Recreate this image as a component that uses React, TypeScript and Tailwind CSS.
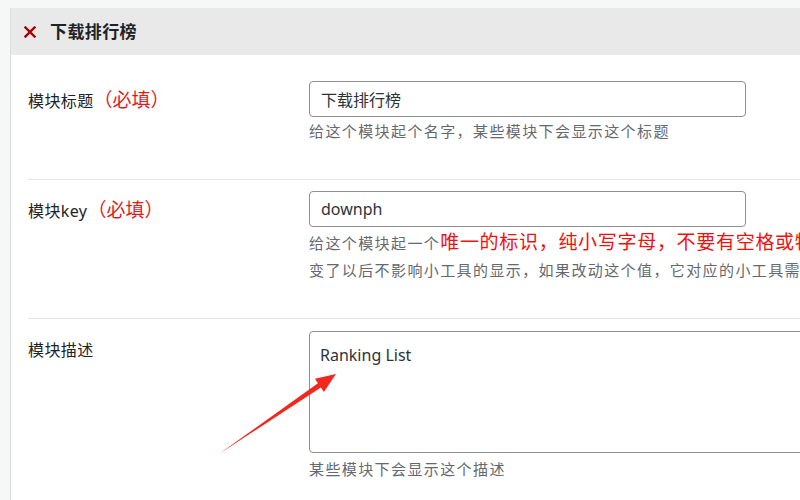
import React from 'react';

const cjk = '"Noto Sans", "Noto Sans CJK SC", sans-serif';

// 表单行
function Row({
  label,
  required,
  first,
  last,
  children,
}: {
  label: string;
  required?: boolean;
  first?: boolean;
  last?: boolean;
  children: React.ReactNode;
}) {
  return (
    <div
      className={`flex pb-[34px] ${first ? 'pt-[12px]' : 'border-t border-[#e4e4e6]'} ${
        !first && last ? 'pt-[12px]' : ''
      } ${!first && !last ? 'pt-[11px]' : ''}`}
    >
      <div className="w-[281px] shrink-0 pt-[7px] text-[16px] leading-[24px] text-[#1d2327] tracking-[0.4px]">
        {label}
        {required && <span className="text-[19px] tracking-[0px] text-[#dd1c1c]">（必填）</span>}
      </div>
      <div className="flex-1 min-w-0">{children}</div>
    </div>
  );
}

export default function App() {
  return (
    <div
      className="relative w-[800px] h-[500px] overflow-hidden bg-[#f6f7f7] pt-2 pl-[10px]"
      style={{ fontFamily: cjk }}
    >
      <div className="w-[830px] h-[520px] bg-white border-l border-[#dcdcde]">
        {/* 标题栏 */}
        <div className="h-[47px] bg-[#e9e9e9] flex items-center pl-[13px]">
          <svg width="12" height="12" viewBox="0 0 12 12" className="mr-[14px]">
            <path d="M1.5 1.5 L10.5 10.5 M10.5 1.5 L1.5 10.5" stroke="#a00" strokeWidth="2.4" strokeLinecap="square" />
          </svg>
          <span className="text-[17px] font-bold text-[#1d2327] tracking-[0.4px]">下载排行榜</span>
        </div>

        <div className="pt-[14px] pl-[17px]">
          <Row label="模块标题" required first>
            <input
              readOnly
              value="下载排行榜"
              className="w-[437px] h-[36px] border border-[#8c8f94] rounded-[4px] px-[11px] text-[16px] text-[#2c3338] outline-none"
              style={{ fontFamily: cjk }}
            />
            <p className="mt-[1px] text-[15px] leading-[27px] tracking-[1.4px] text-[#646970] whitespace-nowrap">
              给这个模块起个名字，某些模块下会显示这个标题
            </p>
          </Row>

          <Row label="模块key" required>
            <input
              readOnly
              value="downph"
              className="w-[437px] h-[36px] border border-[#8c8f94] rounded-[4px] px-[11px] text-[16px] text-[#2c3338] outline-none"
              style={{ fontFamily: cjk }}
            />
            <div className="mt-[2px] text-[15px] leading-[27px] tracking-[1.4px] text-[#646970] whitespace-nowrap">
              <p>
                给这个模块起一个
                <span className="text-[19px] tracking-[0.7px] text-[#f01010]">唯一的标识，纯小写字母，不要有空格或特殊字符</span>
              </p>
              <p>变了以后不影响小工具的显示，如果改动这个值，它对应的小工具需要重新设置</p>
            </div>
          </Row>

          <Row label="模块描述" last>
            <textarea
              readOnly
              value="Ranking List"
              className="block w-[520px] h-[122px] border border-[#8c8f94] rounded-[4px] px-[10px] pt-[11px] text-[16px] leading-[24px] text-[#2c3338] resize-none outline-none"
              style={{ fontFamily: cjk }}
            />
            <p className="mt-[3px] text-[15px] leading-[27px] tracking-[1.4px] text-[#646970] whitespace-nowrap">
              某些模块下会显示这个描述
            </p>
          </Row>
        </div>
      </div>

      {/* 红色箭头标注 */}
      <svg className="absolute left-0 top-0 pointer-events-none" width="800" height="500" viewBox="0 0 800 500">
        <polygon
          points="336,374 314.9,378.7 317.9,383.2 219,454 320.9,387.5 323.9,391.9"
          fill="#f1281d"
        />
      </svg>
    </div>
  );
}
